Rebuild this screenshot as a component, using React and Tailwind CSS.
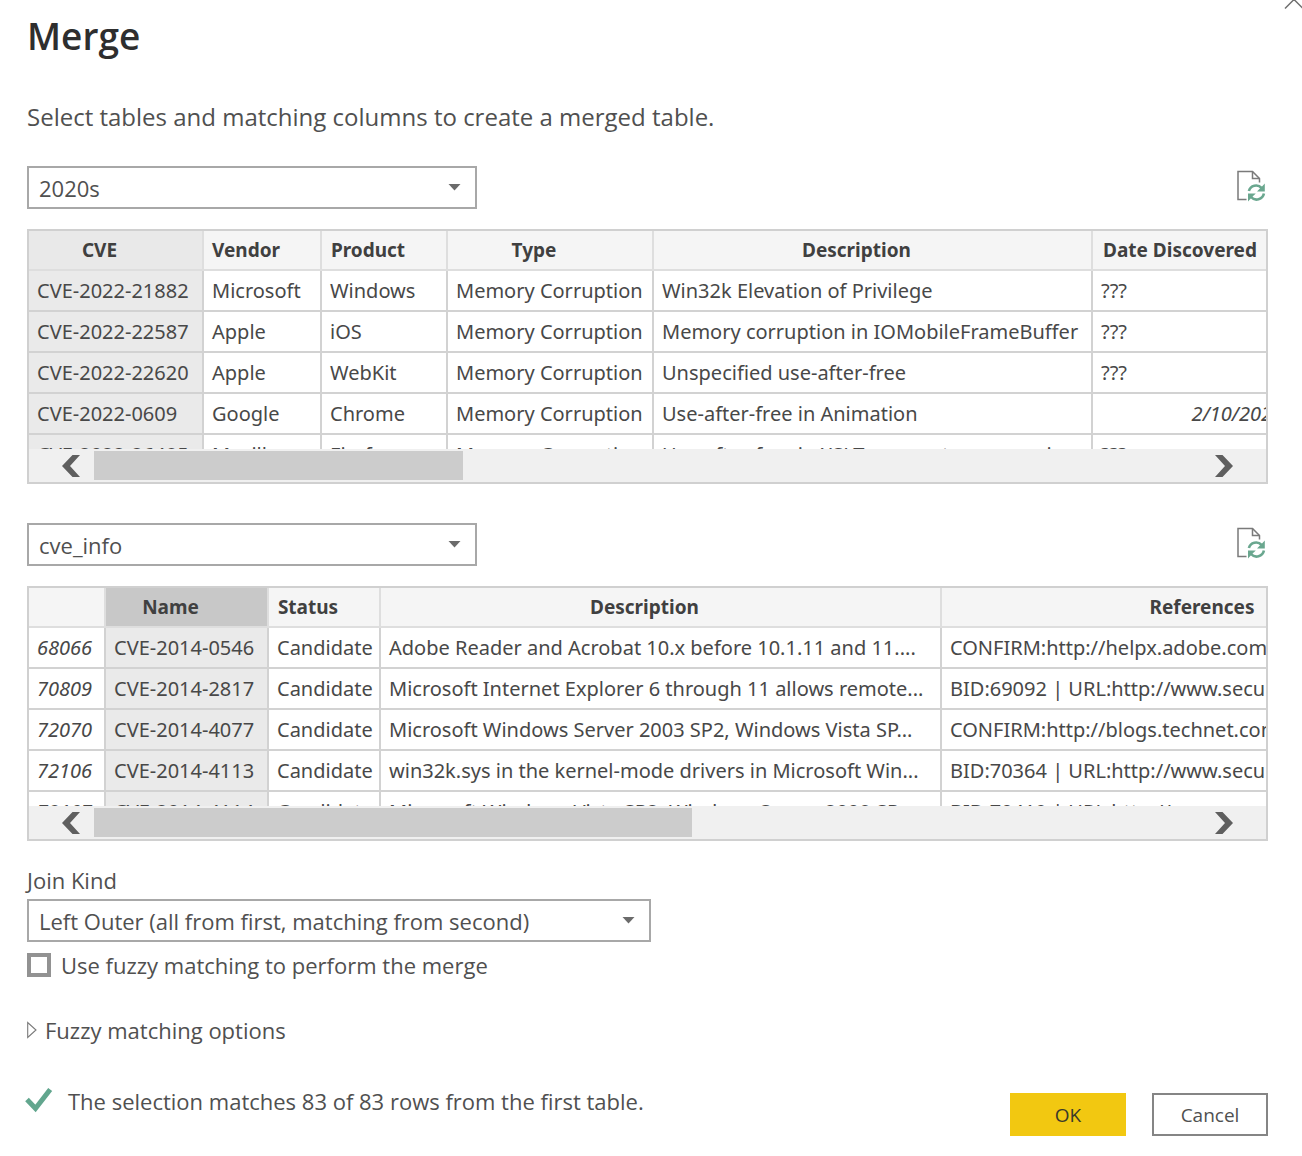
import { useState } from 'react';

const FIRST_TABLE = {
  id: 'first',
  name: '2020s',
  options: ['2020s', 'cve_info'],
  tableClass: 'w-[1272px]',
  thumbClass: 'w-1/3',
  keyHeaderClass: 'bg-[#e9e9e9]',
  keyColumn: 0,
  columns: [
    { label: 'CVE', width: 'w-[175px]' },
    { label: 'Vendor', width: 'w-[118px]' },
    { label: 'Product', width: 'w-[126px]' },
    { label: 'Type', width: 'w-[206px]' },
    { label: 'Description', width: 'w-[439px]' },
    { label: 'Date Discovered', width: 'w-[208px]' },
  ],
  rows: [
    ['CVE-2022-21882', 'Microsoft', 'Windows', 'Memory Corruption', 'Win32k Elevation of Privilege', '???'],
    ['CVE-2022-22587', 'Apple', 'iOS', 'Memory Corruption', 'Memory corruption in IOMobileFrameBuffer', '???'],
    ['CVE-2022-22620', 'Apple', 'WebKit', 'Memory Corruption', 'Unspecified use-after-free', '???'],
    ['CVE-2022-0609', 'Google', 'Chrome', 'Memory Corruption', 'Use-after-free in Animation', '2/10/2022'],
    ['CVE-2022-26485', 'Mozilla', 'Firefox', 'Memory Corruption', 'Use-after-free in XSLT parameter processing', '???'],
  ],
};

const SECOND_TABLE = {
  id: 'second',
  name: 'cve_info',
  options: ['2020s', 'cve_info'],
  tableClass: 'w-[1467px]',
  thumbClass: 'w-[54%]',
  keyHeaderClass: 'bg-[#c8c8c8]',
  keyColumn: 1,
  columns: [
    { label: '', width: 'w-[77px]' },
    { label: 'Name', width: 'w-[163px]' },
    { label: 'Status', width: 'w-[112px]' },
    { label: 'Description', width: 'w-[561px]' },
    { label: 'References', width: 'w-[554px]' },
  ],
  rows: [
    ['68066', 'CVE-2014-0546', 'Candidate', 'Adobe Reader and Acrobat 10.x before 10.1.11 and 11....', 'CONFIRM:http://helpx.adobe.com/security/products'],
    ['70809', 'CVE-2014-2817', 'Candidate', 'Microsoft Internet Explorer 6 through 11 allows remote...', 'BID:69092 | URL:http://www.securityfocus.com/bid'],
    ['72070', 'CVE-2014-4077', 'Candidate', 'Microsoft Windows Server 2003 SP2, Windows Vista SP...', 'CONFIRM:http://blogs.technet.com/b/srd/archive'],
    ['72106', 'CVE-2014-4113', 'Candidate', 'win32k.sys in the kernel-mode drivers in Microsoft Win...', 'BID:70364 | URL:http://www.securityfocus.com/bid'],
    ['72107', 'CVE-2014-4114', 'Candidate', 'Microsoft Windows Vista SP2, Windows Server 2008 SP...', 'BID:70419 | URL:http://www.securityfocus.com/bid'],
  ],
};

const JOIN_KINDS = [
  'Left Outer (all from first, matching from second)',
  'Right Outer (all from second, matching from first)',
  'Full Outer (all rows from both)',
  'Inner (only matching rows)',
];

function RefreshIcon() {
  return (
    <svg width="30" height="32" viewBox="0 0 30 32" fill="none">
      <path d="M10.5 29.5H2V1.5H16.5L23.5 8.5V12.5" stroke="#7a7a7a" strokeWidth="1.5" />
      <path d="M16.5 1.5V8.5H23.5" stroke="#7a7a7a" strokeWidth="1.5" />
      <path d="M12.9 21A7.4 7.2 0 0 1 25.6 18" stroke="#6aa78f" strokeWidth="2.6" />
      <path d="M28.8 13.4V21.4H21L23.4 19L26 16.4Z" fill="#6aa78f" />
      <path d="M27.9 23.6A7.4 7.2 0 0 1 15 27" stroke="#6aa78f" strokeWidth="2.6" />
      <path d="M12 31.4V23.4H19.8L17.4 25.8L14.8 28.4Z" fill="#6aa78f" />
    </svg>
  );
}

function Select({ id, label, value, options, onChange, className }) {
  return (
    <div className={`relative ${className}`}>
      <select
        id={id}
        aria-label={label}
        value={value}
        onChange={(e) => onChange(e.target.value)}
        className="block w-full h-[43px] pl-[10px] pr-10 appearance-none rounded-none border-2 border-[#a8a8a8] bg-white text-[22px] text-[#505050]"
      >
        {options.map((option) => (
          <option key={option}>{option}</option>
        ))}
      </select>
      <svg
        className="absolute right-[15px] top-[17px] pointer-events-none"
        width="14"
        height="8"
        viewBox="0 0 14 8"
      >
        <path d="M0.5 1H12.5L6.5 7.5Z" fill="#6b6b6b" />
      </svg>
    </div>
  );
}

function ScrollBar({ thumbClass }) {
  return (
    <div className="flex h-[33px] bg-[#f0f0f0]">
      <button aria-label="Scroll left" className="flex w-[65px] items-center justify-end pr-[14px]">
        <svg width="18" height="22" viewBox="0 0 18 22">
          <path d="M10.5 0H18L8 11L18 22H10.5L0 11Z" fill="#5f5f5f" />
        </svg>
      </button>
      <div className="flex-1 py-[2px]">
        <div className={`h-full bg-[#cccccc] ${thumbClass}`} />
      </div>
      <button aria-label="Scroll right" className="flex w-[65px] items-center pl-[14px]">
        <svg width="18" height="22" viewBox="0 0 18 22">
          <path d="M7.5 0H0L10 11L0 22H7.5L18 11Z" fill="#5f5f5f" />
        </svg>
      </button>
    </div>
  );
}

function cellClass(table, value, index) {
  if (index === table.keyColumn) return 'px-2 bg-[#eaeaea]';
  if (/^\d+$/.test(value)) return 'px-2 italic';
  if (/^\d+\/\d+\/\d+$/.test(value)) return 'pr-4 italic text-right';
  return 'px-2';
}

function PreviewTable({ table }) {
  const [source, setSource] = useState(table.name);

  return (
    <section>
      <div className="flex items-start justify-between">
        <Select
          id={`${table.id}-source`}
          label={`${table.id} table`}
          value={source}
          options={table.options}
          onChange={setSource}
          className="w-[450px]"
        />
        <button aria-label="Refresh preview" className="mt-1 mr-[2px]">
          <RefreshIcon />
        </button>
      </div>

      <div className="mt-5 border-2 border-[#d0d0d0]">
        <div className="h-[218px] overflow-hidden">
          <table
            className={`table-fixed border-separate border-spacing-0 font-['Noto_Sans',sans-serif] text-[20px] leading-[26px] text-[#484848] whitespace-nowrap ${table.tableClass}`}
          >
            <thead>
              <tr className="h-10 text-[19px] text-[#404040]">
                {table.columns.map((column, i) => (
                  <th
                    key={column.label}
                    className={`p-0 pr-[32px] border-r-2 border-b-2 border-[#dedede] font-bold ${column.width} ${
                      i === table.keyColumn ? table.keyHeaderClass : 'bg-[#f5f5f5]'
                    }`}
                  >
                    {column.label}
                  </th>
                ))}
              </tr>
            </thead>
            <tbody>
              {table.rows.map((row) => (
                <tr key={row.join()} className="h-[41px]">
                  {row.map((value, i) => (
                    <td
                      key={i}
                      className={`py-0 border-r-2 border-b-2 border-[#d2d2d2] ${cellClass(table, value, i)}`}
                    >
                      {value}
                    </td>
                  ))}
                </tr>
              ))}
            </tbody>
          </table>
        </div>
        <ScrollBar thumbClass={table.thumbClass} />
      </div>
    </section>
  );
}

export default function App() {
  const [joinKind, setJoinKind] = useState(JOIN_KINDS[0]);
  const [fuzzy, setFuzzy] = useState(false);

  return (
    <div className="relative min-h-screen overflow-hidden bg-white pl-[27px] pr-[34px] pt-3 pb-5 font-['Open_Sans',sans-serif] text-[22px] leading-[30px] text-[#505050]">
      <button aria-label="Close" className="absolute top-0 right-0">
        <svg width="18" height="10" viewBox="0 0 18 10" fill="none">
          <path d="M1 8.5L10 -0.5L19 8.5" stroke="#707070" strokeWidth="1.5" />
        </svg>
      </button>

      <h1 className="text-[37px] leading-[48px] font-semibold text-[#2e2e2e]">Merge</h1>
      <p className="mt-[41px] mb-[33px] text-[24px] leading-[32px]">
        Select tables and matching columns to create a merged table.
      </p>

      <div className="flex flex-col gap-[39px]">
        <PreviewTable table={FIRST_TABLE} />
        <PreviewTable table={SECOND_TABLE} />
      </div>

      <div className="mt-6">
        <label htmlFor="join-kind" className="block mb-1">
          Join Kind
        </label>
        <Select
          id="join-kind"
          label="Join Kind"
          value={joinKind}
          options={JOIN_KINDS}
          onChange={setJoinKind}
          className="w-[624px]"
        />
      </div>

      <label className="mt-2 flex items-center gap-[10px]">
        <input
          type="checkbox"
          checked={fuzzy}
          onChange={(e) => setFuzzy(e.target.checked)}
          className="size-6 appearance-none border-4 border-[#929292] bg-white checked:bg-[#929292]"
        />
        Use fuzzy matching to perform the merge
      </label>

      <button className="mt-[35px] flex items-center gap-2">
        <svg width="10" height="18" viewBox="0 0 10 18" fill="none">
          <path d="M0.7 1.5V16.5L9 9Z" stroke="#7a7a7a" strokeWidth="1.1" />
        </svg>
        Fuzzy matching options
      </button>

      <div className="mt-[41px] flex items-start justify-between">
        <p className="flex items-center gap-[15px]">
          <svg className="-ml-[2px]" width="28" height="26" viewBox="0 0 28 26" fill="none">
            <path d="M2 11.5L10.5 20.5L25.2 1.5" stroke="#62a68e" strokeWidth="5" />
          </svg>
          The selection matches 83 of 83 rows from the first table.
        </p>
        <div className="mt-[7px] flex gap-[26px] text-[19px]">
          <button className="h-[43px] w-[116px] bg-[#f2c811] text-[#3a3a2a]">OK</button>
          <button className="h-[43px] w-[116px] border-2 border-[#858585] bg-white">Cancel</button>
        </div>
      </div>
    </div>
  );
}
